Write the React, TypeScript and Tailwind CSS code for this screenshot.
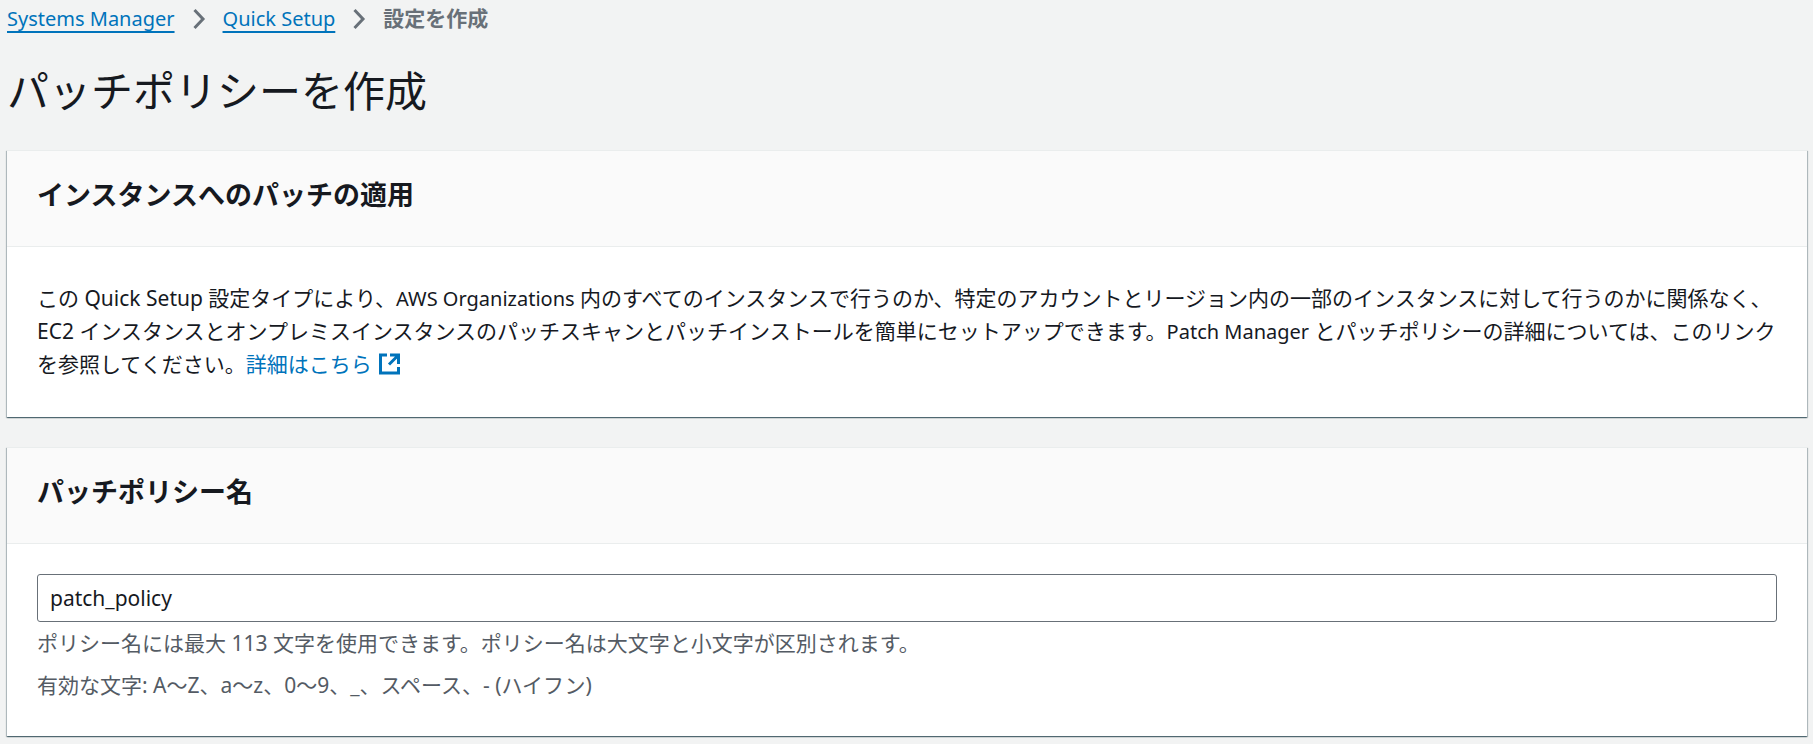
import { useState } from 'react';
import type { ReactNode } from 'react';

const breadcrumbs = [
  { label: 'Systems Manager', href: '#systems-manager' },
  { label: 'Quick Setup', href: '#quick-setup' },
];

function ChevronIcon() {
  return (
    <svg viewBox="0 0 24 24" className="w-6 h-6 mx-3 shrink-0" fill="none" stroke="#687078" strokeWidth="3" aria-hidden="true">
      <path d="M7.5 3l8.5 9-8.5 9" />
    </svg>
  );
}

function ExternalIcon() {
  return (
    <svg viewBox="0 0 24 24" className="inline-block w-6 h-6 ml-[5px] -mt-1" fill="none" stroke="currentColor" strokeWidth="3" aria-hidden="true">
      <path d="M10 3H3.5v18h18v-6" />
      <path d="M13 3h8.5v9M21 3.5l-9 9" />
    </svg>
  );
}

function Panel({ title, titleId, children }: { title: string; titleId: string; children: ReactNode }) {
  return (
    <section
      aria-labelledby={titleId}
      className="bg-white border-t border-[#eaeded] shadow-[0_1px_1px_0_rgba(0,36,48,0.45),1px_1px_1px_0_rgba(0,36,48,0.22),-1px_1px_1px_0_rgba(0,36,48,0.22)]"
    >
      <div className="px-[30px] pt-6 pb-[31px] bg-[#fafafa] border-b border-[#eaeded]">
        <h2 id={titleId} className="text-[27px] leading-[40px] font-bold">
          {title}
        </h2>
      </div>
      {children}
    </section>
  );
}

export default function App() {
  const [policyName, setPolicyName] = useState('patch_policy');

  return (
    <div
      lang="ja"
      className="min-h-screen bg-[#f2f3f3] text-[#16191f] text-[21px] leading-[33px] pt-[2px] pl-[7px] pr-[6px] pb-[6px] font-['Noto_Sans','Noto_Sans_CJK_JP',sans-serif]"
    >
      <nav aria-label="breadcrumb">
        <ol className="flex items-center">
          {breadcrumbs.map((b) => (
            <li key={b.href} className="flex items-center">
              <a href={b.href} className="text-[20px] text-[#0073bb] underline decoration-2 underline-offset-[5px]">
                {b.label}
              </a>
              <ChevronIcon />
            </li>
          ))}
          <li className="font-bold text-[#687078]" aria-current="page">
            設定を作成
          </li>
        </ol>
      </nav>

      <h1 className="mt-6 mb-7 text-[42px] leading-[63px]">パッチポリシーを作成</h1>

      <div className="flex flex-col gap-[30px]">
        <Panel title="インスタンスへのパッチの適用" titleId="about-title">
          <p className="px-[30px] pt-[35px] pb-9">
            この Quick Setup 設定タイプにより、<span className="text-[20px]">AWS Organizations</span> 内のすべてのインスタンスで行うのか、特定のアカウントとリージョン内の一部のインスタンスに対して行うのかに関係なく、EC2 インスタンスとオンプレミスインスタンスのパッチスキャンとパッチインストールを簡単にセットアップできます。<span className="text-[20px]">Patch Manager</span> とパッチポリシーの詳細については、このリンクを参照してください。
            <a href="#learn-more" className="text-[#0073bb]">
              詳細はこちら
              <ExternalIcon />
            </a>
          </p>
        </Panel>

        <Panel title="パッチポリシー名" titleId="policy-title">
          <div className="px-[30px] pt-[30px] pb-[34px]">
            <input
              type="text"
              aria-labelledby="policy-title"
              aria-describedby="policy-hint"
              value={policyName}
              onChange={(e) => setPolicyName(e.target.value)}
              className="block w-full h-12 px-3 bg-white border border-[#687078] rounded-[3px]"
            />
            <div id="policy-hint" className="mt-[5px] flex flex-col gap-[9px] text-[#545b64]">
              <p>ポリシー名には最大 113 文字を使用できます。ポリシー名は大文字と小文字が区別されます。</p>
              <p>有効な文字: A～Z、a～z、0～9、_、スペース、- (ハイフン)</p>
            </div>
          </div>
        </Panel>
      </div>
    </div>
  );
}
